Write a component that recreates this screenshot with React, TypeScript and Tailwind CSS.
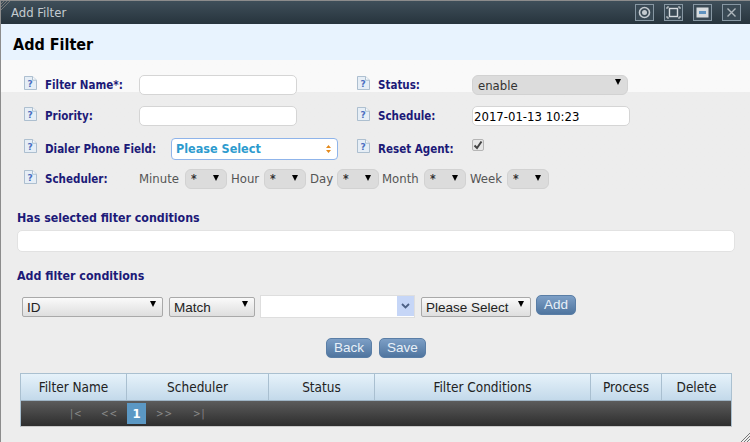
import type { ReactNode } from 'react'

const SANS = 'font-["DejaVu_Sans_Condensed","DejaVu_Sans",sans-serif]'
const ARIAL = 'font-["Liberation_Sans",Arial,sans-serif]'

function HelpIcon({ className }: { className: string }) {
  return (
    <svg width="13" height="14" viewBox="0 0 13 15" preserveAspectRatio="none" className={`shrink-0 ${className}`}>
      <path d="M0.5 0.5H8.5L12.5 4.5V14.5H0.5Z" fill="#e6eef6" stroke="#a9bccd" />
      <path d="M8.5 0.5V4.5H12.5" fill="#f7fafc" stroke="#a9bccd" />
      <text x="6.2" y="11.5" fontSize="9" fontWeight="700" textAnchor="middle" fill="#4a6fc0" fontFamily="DejaVu Sans">?</text>
    </svg>
  )
}

function Label({ children, width, tall }: { children: ReactNode; width: string; tall?: boolean }) {
  return (
    <div className={`flex items-center gap-2 whitespace-nowrap ${width}`}>
      <HelpIcon className={tall ? 'mb-[7px]' : 'mb-[4px]'} />
      <span className="pt-[2px] text-[11.5px] font-bold text-[#1c1a78]">{children}</span>
    </div>
  )
}

function TextBox({ value = '', className = '' }: { value?: string; className?: string }) {
  return (
    <input
      readOnly
      value={value}
      className={`h-[20px] rounded-[5px] border border-[#d5d5d5] bg-white px-[1px] text-[13px] text-black outline-none ${SANS} ${className}`}
    />
  )
}

function Arrow({ right = 'right-[7px]' }: { right?: string }) {
  return <span className={`pointer-events-none absolute top-[6px] h-0 w-0 border-x-[3.5px] border-t-[6px] border-x-transparent border-t-black ${right}`} />
}

// rounded grey select used in the top form
function GreySelect({ value, className }: { value: string; className: string }) {
  return (
    <div className={`relative ${className}`}>
      <select className={`h-[20px] w-full appearance-none rounded-[6px] border border-[#d2d2d2] bg-[#dcdcdc] pl-[5px] text-[13px] text-[#333] outline-none ${SANS}`}>
        <option>{value}</option>
      </select>
      <Arrow />
    </div>
  )
}

function StarSelect() {
  return (
    <div className="relative w-[42px] shrink-0">
      <select className={`h-[20px] w-full appearance-none rounded-[6px] border border-[#d2d2d2] bg-[#dcdcdc] pl-[5px] text-[12px] font-bold text-[#333] outline-none ${SANS}`}>
        <option>*</option>
      </select>
      <Arrow right="right-[8px]" />
    </div>
  )
}

// square select in the conditions row
function PlainSelect({ value, className }: { value: string; className: string }) {
  return (
    <div className={`relative ${className}`}>
      <select className={`h-[20px] w-full appearance-none rounded-[2px] border border-[#a9a9a9] bg-gradient-to-b from-[#fafafa] to-[#dedede] pb-[2px] pl-[4px] text-[13.5px] text-[#222] outline-none ${ARIAL}`}>
        <option>{value}</option>
      </select>
      <Arrow />
    </div>
  )
}

function BlueButton({ children, className }: { children: ReactNode; className: string }) {
  return (
    <button className={`h-[20px] rounded-[5px] border border-[#5a7ea6] bg-gradient-to-b from-[#7d9fc6] to-[#4f759f] text-[13.5px] leading-none text-[#e8f0f8] ${ARIAL} ${className}`}>
      {children}
    </button>
  )
}

function WinButton({ children }: { children: ReactNode }) {
  return (
    <div className="flex h-[17px] w-[19px] items-center justify-center border border-[#8797a3] bg-[#3a4a55]">
      <svg width="15" height="13" viewBox="0 0 15 13">{children}</svg>
    </div>
  )
}

function Grip({ className }: { className: string }) {
  return (
    <svg width="9" height="9" viewBox="0 0 9 9" className={`absolute ${className}`}>
      <path d="M0 9L9 0M3 9L9 3M6 9L9 6" stroke="#777" strokeWidth="1" />
    </svg>
  )
}

const COLUMNS = [
  { name: 'Filter Name', width: 'w-[106px]' },
  { name: 'Scheduler', width: 'w-[142px]' },
  { name: 'Status', width: 'w-[106px]' },
  { name: 'Filter Conditions', width: 'w-[216px]' },
  { name: 'Process', width: 'w-[71px]' },
  { name: 'Delete', width: 'flex-1' },
]

export default function App() {
  return (
    <div className={`relative h-[442px] w-[750px] overflow-hidden border-t border-l border-[#8c8c8c] bg-[#ededed] ${SANS}`}>
      {/* title bar */}
      <div className="flex h-[23px] items-center justify-between bg-gradient-to-b from-[#3f4f5a] to-[#27343d] pl-[10px] pr-[9px]">
        <span className="text-[13px] text-[#c4cbd0]">Add Filter</span>
        <div className="flex gap-[10px]">
          <WinButton>
            <circle cx="7.5" cy="6.5" r="5" fill="none" stroke="#c5cbd0" strokeWidth="1.6" />
            <circle cx="7.5" cy="6.5" r="2.5" fill="#c5cbd0" />
          </WinButton>
          <WinButton>
            <rect x="3.5" y="2.5" width="8" height="8" fill="none" stroke="#d5dade" strokeWidth="1.4" />
            <path d="M1 3V1H3M12 1H14V3M14 10V12H12M3 12H1V10" fill="none" stroke="#d5dade" />
          </WinButton>
          <WinButton>
            <rect x="1.5" y="1.5" width="12" height="10" fill="#d7dcdf" />
            <rect x="4" y="5" width="7" height="3" fill="#5f93c0" />
          </WinButton>
          <WinButton>
            <path d="M3.5 2.5L11.5 10.5M11.5 2.5L3.5 10.5" stroke="#aeb6bc" strokeWidth="1.4" />
          </WinButton>
        </div>
      </div>

      {/* heading */}
      <div className="flex h-[36px] items-center bg-[#e8f3fe] pl-[12px] pt-[6px]">
        <h1 className="text-[16px] font-bold text-black">Add Filter</h1>
      </div>

      {/* form */}
      <div className="bg-gradient-to-b from-[#f9f9f9] from-[32px] to-[#ededed] to-[32px] pl-[23px] pt-[15px]">
        <div className="flex h-[20px] items-center">
          <Label width="w-[115px]">Filter Name*:</Label>
          <TextBox className="w-[158px]" />
          <div className="w-[60px]" />
          <Label width="w-[115px]">Status:</Label>
          <GreySelect value="enable" className="w-[156px]" />
        </div>
        <div className="mt-[11px] flex h-[20px] items-center">
          <Label width="w-[115px]">Priority:</Label>
          <TextBox className="w-[158px]" />
          <div className="w-[60px]" />
          <Label width="w-[115px]">Schedule:</Label>
          <TextBox value="2017-01-13 10:23" className="w-[158px]" />
        </div>
        <div className="mt-[12px] flex h-[22px] items-center">
          <Label width="w-[147px]" tall>Dialer Phone Field:</Label>
          <div className="relative w-[167px]">
            <div className="flex h-[22px] items-center rounded-[4px] border border-[#8fb4ea] bg-white pl-[4px] text-[12.5px] font-bold text-[#2d9bce]">
              Please Select
            </div>
            <svg width="5" height="8" viewBox="0 0 5 8" className="absolute right-[7px] top-[7px]">
              <path d="M0 3L2.5 0L5 3ZM0 5L2.5 8L5 5Z" fill="#e58a1c" />
            </svg>
          </div>
          <div className="w-[19px]" />
          <Label width="w-[115px]" tall>Reset Agent:</Label>
          <span className="mb-[8px] flex h-[12px] w-[12px] items-center justify-center rounded-[2px] border border-[#b5b5b5] bg-[#e6e6e6]">
            <svg width="10" height="10" viewBox="0 0 10 10">
              <path d="M1.5 5.5L4 8L8.5 1.5" fill="none" stroke="#444" strokeWidth="2" />
            </svg>
          </span>
        </div>
        <div className="mt-[9px] flex h-[20px] items-center">
          <Label width="w-[115px]">Scheduler:</Label>
          <div className="flex items-center text-[13px] text-[#555]">
            <span className="w-[46px]">Minute</span>
            <StarSelect />
            <span className="ml-[4px] w-[33px]">Hour</span>
            <StarSelect />
            <span className="ml-[4px] w-[27px]">Day</span>
            <StarSelect />
            <span className="ml-[3px] w-[42px]">Month</span>
            <StarSelect />
            <span className="ml-[4px] w-[37px]">Week</span>
            <StarSelect />
          </div>
        </div>
      </div>

      {/* selected conditions */}
      <div className="px-[16px] pt-[21px]">
        <h2 className="text-[12.3px] font-bold leading-[16px] text-[#1c1a78]">Has selected filter conditions</h2>
        <div className="mt-[4px] h-[22px] w-[718px] rounded-[5px] border border-[#e2e2e2] bg-white" />
        <h2 className="mt-[16px] text-[12.3px] font-bold leading-[16px] text-[#1c1a78]">Add filter conditions</h2>
      </div>

      {/* add condition row */}
      <div className="flex items-start pl-[21px] pt-[11px]">
        <PlainSelect value="ID" className="w-[141px]" />
        <PlainSelect value="Match" className="ml-[6px] w-[86px]" />
        <div className="ml-[5px] flex h-[23px] w-[155px] border border-[#dedede] bg-white">
          <div className="flex-1" />
          <div className="flex h-[20px] w-[17px] items-center justify-center bg-[#c6d6f7]">
            <svg width="9" height="6" viewBox="0 0 9 6">
              <path d="M1 1L4.5 4.5L8 1" fill="none" stroke="#4d6185" strokeWidth="1.8" />
            </svg>
          </div>
        </div>
        <PlainSelect value="Please Select" className="ml-[6px] w-[110px]" />
        <BlueButton className="ml-[5px] w-[40px]">Add</BlueButton>
      </div>

      {/* actions */}
      <div className="flex gap-[7px] pl-[325px] pt-[19px]">
        <BlueButton className="w-[46px]">Back</BlueButton>
        <BlueButton className="w-[47px]">Save</BlueButton>
      </div>

      {/* table */}
      <div className="ml-[19px] mt-[15px] w-[712px] border border-[#aac0d0] border-b-[#c9c9c9]">
        <div className="flex h-[27px] border-b border-[#9fb5c6] bg-gradient-to-b from-[#e6f2fa] to-[#c3d9ea]">
          {COLUMNS.map(col => (
            <div
              key={col.name}
              className={`flex items-center justify-center border-r border-[#a9bfd0] text-[13.5px] text-[#222] last:border-r-0 ${col.width}`}
            >
              {col.name}
            </div>
          ))}
        </div>
        <div className="flex h-[25px] items-center bg-gradient-to-b from-[#5c5c5c] to-[#2e2e2e] text-[10px] text-[#8a8a8a]">
          <span className="ml-[49px] w-[31px] tracking-[1px]">|&lt;</span>
          <span className="w-[26px] tracking-[1px]">&lt;&lt;</span>
          <span className="flex h-[21px] w-[19px] items-center justify-center bg-[#5b98c4] text-[13px] font-bold text-white">1</span>
          <span className="ml-[10px] w-[37px] tracking-[1px]">&gt;&gt;</span>
          <span className="tracking-[1px]">&gt;|</span>
        </div>
      </div>

      <Grip className="right-0 bottom-0" />
      <svg width="9" height="9" viewBox="0 0 9 9" className="absolute left-0 top-0">
        <path d="M0 9L9 0M0 6L6 0M0 3L3 0" stroke="#777" strokeWidth="1" />
      </svg>
    </div>
  )
}
